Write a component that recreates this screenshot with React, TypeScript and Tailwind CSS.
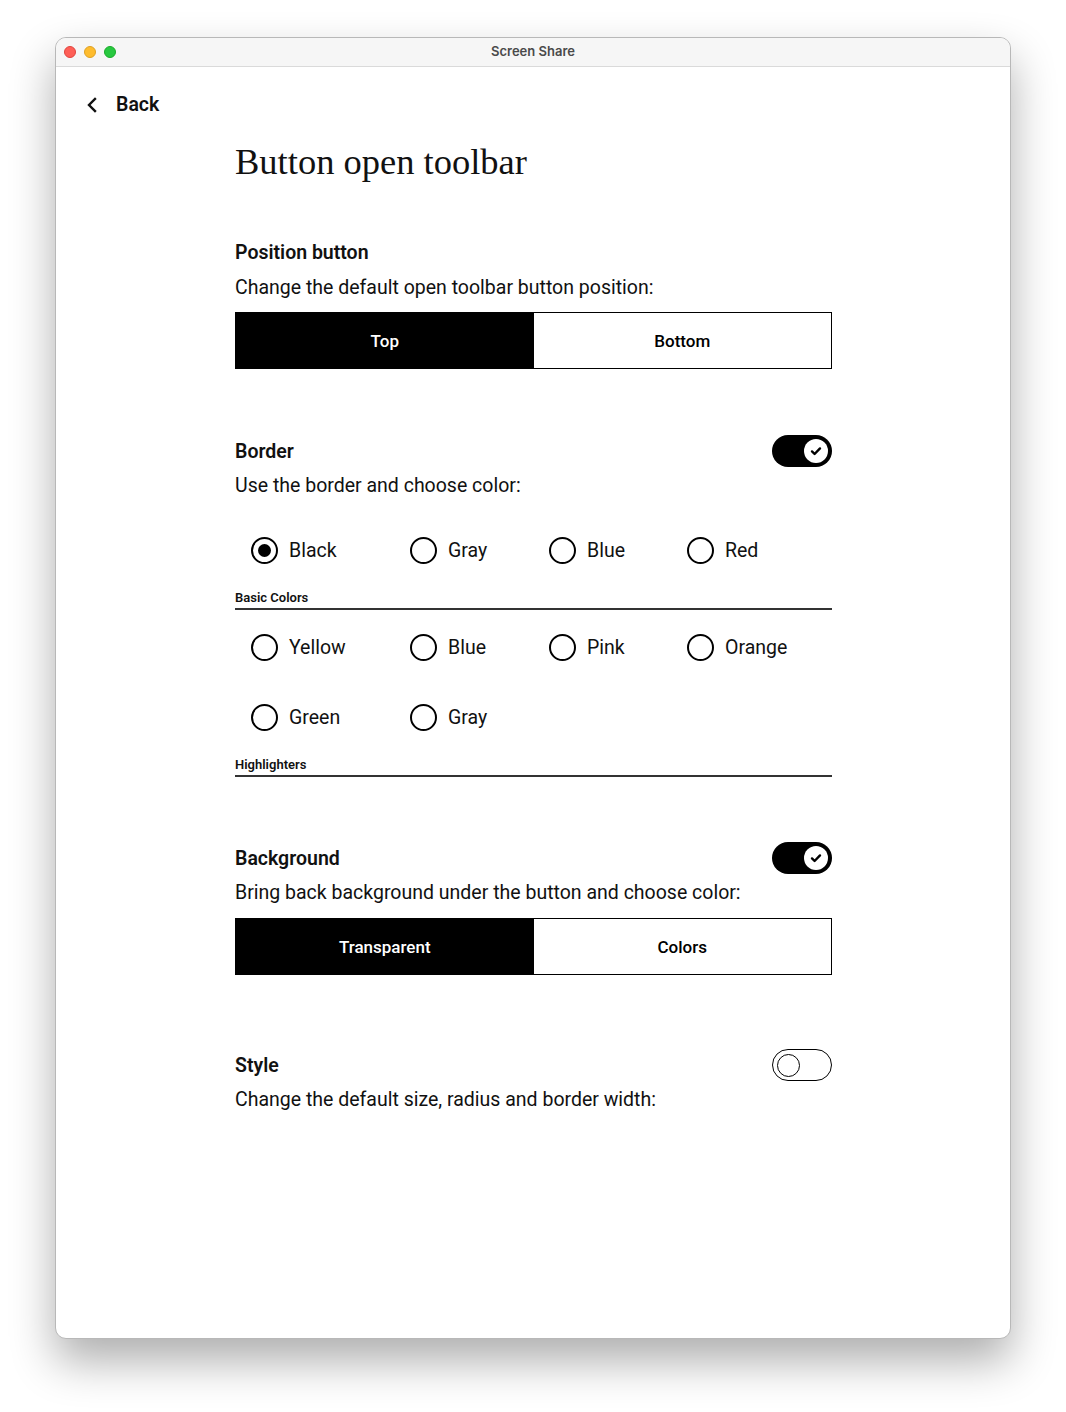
import { useState } from "react";

const sans = "font-['Roboto',sans-serif]";

function Toggle({ on }: { on: boolean }) {
  if (on) {
    return (
      <div className="flex h-[32px] w-[60px] items-center justify-end rounded-full bg-black pr-[4px]">
        <div className="flex h-[24px] w-[24px] items-center justify-center rounded-full bg-white">
          <svg width="14" height="14" viewBox="0 0 14 14" fill="none">
            <path d="M3 7.4l2.6 2.6L11 4.4" stroke="black" strokeWidth="2.4" strokeLinecap="round" strokeLinejoin="round" />
          </svg>
        </div>
      </div>
    );
  }
  return (
    <div className="flex h-[32px] w-[60px] items-center rounded-full border border-black bg-white pl-[4px]">
      <div className="h-[23px] w-[23px] rounded-full border border-black" />
    </div>
  );
}

function Radio({ label, checked, width }: { label: string; checked?: boolean; width: string }) {
  return (
    <div className={`flex h-[27px] items-center gap-[11px] ${width}`}>
      <div className="flex h-[27px] w-[27px] items-center justify-center rounded-full border-[2.5px] border-black">
        {checked && <div className="h-[13px] w-[13px] rounded-full bg-black" />}
      </div>
      <span className="pt-[1px] text-[19.5px] leading-[26px] text-[#111]">{label}</span>
    </div>
  );
}

function Segmented({ left, right }: { left: string; right: string }) {
  return (
    <div className="flex h-[57px] w-[597px] border border-black text-[17px] font-medium">
      <div className="flex w-1/2 items-center justify-center bg-black text-white">{left}</div>
      <div className="flex w-1/2 items-center justify-center bg-white text-black">{right}</div>
    </div>
  );
}

function GroupLabel({ children }: { children: string }) {
  return (
    <div className="w-[597px] border-b-2 border-[#333] pt-[1px] pb-[2px] text-[13px] leading-[16px] font-semibold text-[#111]">
      {children}
    </div>
  );
}

export default function App() {
  const [colWidths] = useState(["w-[159px]", "w-[139px]", "w-[138px]", "w-[140px]"]);

  return (
    <div className={`min-h-[1412px] bg-white pt-[37px] pl-[55px] ${sans}`}>
      <div className="h-[1302px] w-[956px] overflow-hidden rounded-[11px] border border-[#b8b8b8] bg-white shadow-[0_22px_45px_rgba(0,0,0,0.32)]">
        {/* title bar */}
        <div className="relative flex h-[29px] items-center border-b border-[#dadada] bg-[#f6f6f6] pl-[8px]">
          <div className="flex gap-[8px]">
            <div className="h-[12px] w-[12px] rounded-full border border-[#e0443e] bg-[#fe5f57]" />
            <div className="h-[12px] w-[12px] rounded-full border border-[#dea123] bg-[#febc2e]" />
            <div className="h-[12px] w-[12px] rounded-full border border-[#1aab29] bg-[#28c840]" />
          </div>
          <div className="absolute inset-x-0 text-center text-[13px] font-semibold text-[#4a4a4a] font-['Inter',sans-serif]">
            Screen Share
          </div>
        </div>

        <div className="pl-[29px] pt-[25px]">
          <div className="flex items-center gap-[17px] text-[19.5px] leading-[26px] font-semibold text-[#111]">
            <svg width="14" height="16" viewBox="0 0 14 16" fill="none">
              <path d="M10 2L4 8l6 6" stroke="#111" strokeWidth="2.4" strokeLinecap="square" />
            </svg>
            <span>Back</span>
          </div>
        </div>

        <div className="pl-[179px] text-[19.5px] leading-[26px] text-[#111]">
          <h1 className="mt-[22px] font-['Liberation_Serif',serif] text-[36.5px] leading-[44px]">
            Button open toolbar
          </h1>

          {/* Position */}
          <div className="mt-[56px] font-semibold">Position button</div>
          <div className="mt-[9px]">Change the default open toolbar button position:</div>
          <div className="mt-[11px]">
            <Segmented left="Top" right="Bottom" />
          </div>

          {/* Border */}
          <div className="mt-[66px] flex w-[597px] items-center justify-between">
            <div className="pt-[1px] font-semibold">Border</div>
            <Toggle on />
          </div>
          <div className="mt-[6px]">Use the border and choose color:</div>

          <div className="mt-[38px] flex pl-[16px]">
            <Radio label="Black" checked width={colWidths[0]} />
            <Radio label="Gray" width={colWidths[1]} />
            <Radio label="Blue" width={colWidths[2]} />
            <Radio label="Red" width={colWidths[3]} />
          </div>
          <div className="mt-[25px]">
            <GroupLabel>Basic Colors</GroupLabel>
          </div>

          <div className="mt-[24px] flex pl-[16px]">
            <Radio label="Yellow" width={colWidths[0]} />
            <Radio label="Blue" width={colWidths[1]} />
            <Radio label="Pink" width={colWidths[2]} />
            <Radio label="Orange" width={colWidths[3]} />
          </div>
          <div className="mt-[43px] flex pl-[16px]">
            <Radio label="Green" width={colWidths[0]} />
            <Radio label="Gray" width={colWidths[1]} />
          </div>
          <div className="mt-[25px]">
            <GroupLabel>Highlighters</GroupLabel>
          </div>

          {/* Background */}
          <div className="mt-[65px] flex w-[597px] items-center justify-between">
            <div className="pt-[1px] font-semibold">Background</div>
            <Toggle on />
          </div>
          <div className="mt-[6px]">Bring back background under the button and choose color:</div>
          <div className="mt-[12px]">
            <Segmented left="Transparent" right="Colors" />
          </div>

          {/* Style */}
          <div className="mt-[74px] flex w-[597px] items-center justify-between">
            <div className="pt-[1px] font-semibold">Style</div>
            <Toggle on={false} />
          </div>
          <div className="mt-[6px]">Change the default size, radius and border width:</div>
        </div>
      </div>
    </div>
  );
}
